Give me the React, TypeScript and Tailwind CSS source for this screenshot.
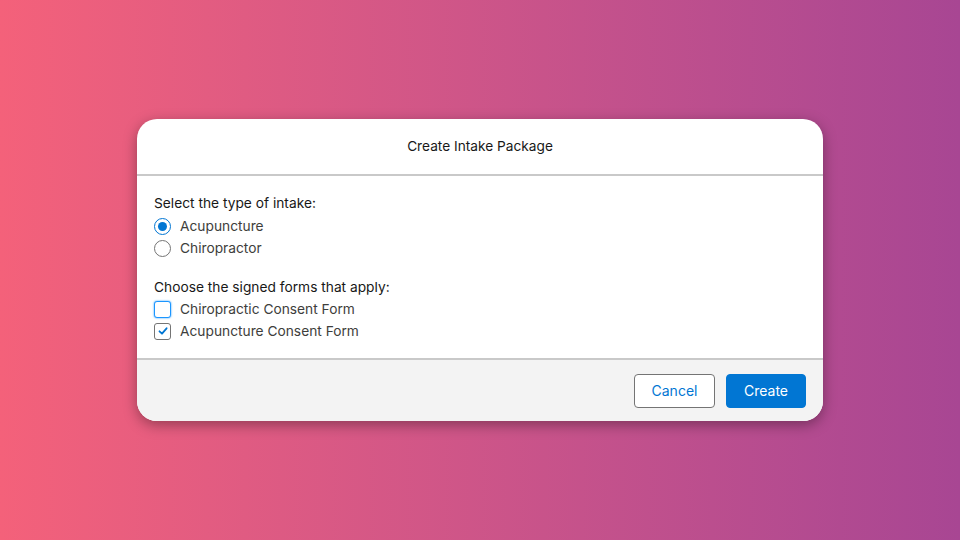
export default function App() {
  return (
    <div
      className="flex h-[540px] w-[960px] items-center justify-center bg-gradient-to-r from-[#f4617a] to-[#a84693] text-[#181818]"
      style={{ fontFamily: 'Inter, "Liberation Sans", Arial, sans-serif' }}
    >
      {/* dialog */}
      <div className="w-[686px] overflow-hidden rounded-[20px] bg-white shadow-[0_4px_14px_rgba(0,0,0,0.35)]">
        <div className="flex h-[57px] items-center justify-center border-b-2 border-[#c9c9c9]">
          <h2 className="text-[13.7px]">Create Intake Package</h2>
        </div>

        <div className="px-[17px] pt-[16px] pb-[16px] text-[13.75px] leading-[22px]">
          <p className="mb-[1px]">Select the type of intake:</p>
          <label className="flex items-center gap-[9px]">
            <span className="flex h-[17px] w-[17px] items-center justify-center rounded-full border border-[#0176d3] bg-white">
              <span className="h-[9px] w-[9px] rounded-full bg-[#0176d3]"></span>
            </span>
            <span className="text-[#3e3e3c]">Acupuncture</span>
          </label>
          <label className="flex items-center gap-[9px]">
            <span className="h-[17px] w-[17px] rounded-full border border-[#747474] bg-white"></span>
            <span className="text-[#3e3e3c]">Chiropractor</span>
          </label>

          <p className="mt-[17px]">Choose the signed forms that apply:</p>
          <label className="flex items-center gap-[9px]">
            <span className="h-[17px] w-[17px] rounded-[3px] border border-[#1b96ff] shadow-[0_0_2px_#1b96ff] bg-white"></span>
            <span className="text-[#3e3e3c]">Chiropractic Consent Form</span>
          </label>
          <label className="flex items-center gap-[9px]">
            <span className="flex h-[17px] w-[17px] items-center justify-center rounded-[3px] border border-[#747474] bg-white">
              <svg width="10" height="10" viewBox="0 0 10 10" fill="none">
                <path d="M1.5 5.3 L4 7.7 L8.6 2.3" stroke="#0176d3" strokeWidth="1.8" strokeLinecap="round" strokeLinejoin="round" />
              </svg>
            </span>
            <span className="text-[#3e3e3c]">Acupuncture Consent Form</span>
          </label>
        </div>

        <div className="flex h-[63px] items-center justify-end gap-[11px] border-t-2 border-[#c9c9c9] bg-[#f3f3f3] px-[17px]">
          <button className="h-[34px] w-[81px] rounded-[4px] border border-[#747474] bg-white text-[14px] text-[#0176d3]">
            Cancel
          </button>
          <button className="h-[34px] w-[80px] rounded-[4px] border border-[#0176d3] bg-[#0176d3] text-[14px] text-white">
            Create
          </button>
        </div>
      </div>
    </div>
  );
}
